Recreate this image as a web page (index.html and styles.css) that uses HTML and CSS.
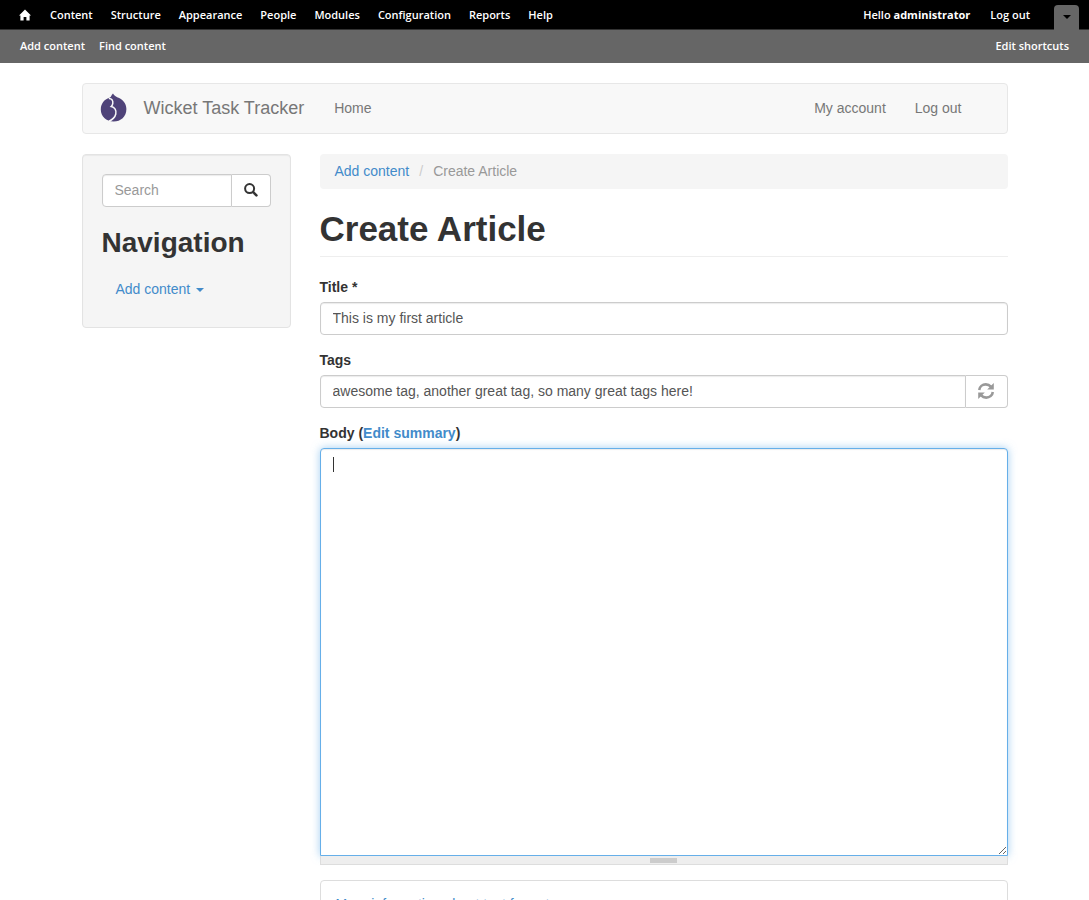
FILE: index.html
```html
<!DOCTYPE html>
<html lang="en">
<head>
    <meta charset="UTF-8">
    <meta name="viewport" content="width=device-width, initial-scale=1.0">
    <title>Create Article | Wicket Task Tracker</title>
    <link rel="stylesheet" href="styles.css">
</head>
<body>
    <div class="toolbar">
        <div class="toolbar-menu">
            <a href="#" class="toolbar-home" aria-label="Home">
                <svg width="12" height="12" viewBox="0 0 12 12" fill="#fff"><path d="M6 0.5 L12 6.5 H10.6 V11.5 H7.4 V8 H4.6 V11.5 H1.4 V6.5 H0 Z"/></svg>
            </a>
            <a href="#">Content</a>
            <a href="#">Structure</a>
            <a href="#">Appearance</a>
            <a href="#">People</a>
            <a href="#">Modules</a>
            <a href="#">Configuration</a>
            <a href="#">Reports</a>
            <a href="#">Help</a>
            <div class="toolbar-user">
                <a href="#">Hello <strong>administrator</strong></a>
                <a href="#">Log out</a>
                <button type="button" class="toolbar-toggle" aria-label="Toggle shortcuts"><span class="caret"></span></button>
            </div>
        </div>
        <div class="toolbar-shortcuts">
            <a href="#">Add content</a>
            <a href="#">Find content</a>
            <a href="#" class="edit-shortcuts">Edit shortcuts</a>
        </div>
    </div>

    <div class="container">
        <header class="navbar">
            <a href="#" class="logo" aria-label="Wicket Task Tracker">
                <svg width="28" height="30" viewBox="0 0 28 30">
                    <path fill="#4f4379" d="M13 0.4 C14 2 15.6 3.2 17.2 4.2 C22.6 5.8 26.4 10.4 26.4 16 C26.4 23.6 20.8 28.6 13.6 28.6 C6 28.6 0.8 23.4 0.8 16.6 C0.8 10.4 4.6 6.2 10 4.6 C11.6 3.6 11 2 13 0.4 Z"/>
                    <path fill="none" stroke="#f8f8f8" stroke-width="1.5" d="M8.8 5.4 C11.6 5.2 13.2 7.4 12.8 10.4 C12.6 11.8 12 12.8 11.2 13.6 C14.8 14.2 16.6 17.4 15.8 21 C15 24.4 12.6 26.6 9 28.2"/>
                </svg>
            </a>
            <a href="#" class="brand">Wicket Task Tracker</a>
            <a href="#">Home</a>
            <nav class="navbar-right">
                <a href="#">My account</a>
                <a href="#">Log out</a>
            </nav>
        </header>

        <div class="row">
            <aside class="sidebar">
                <form class="input-group">
                    <input type="text" class="form-control" placeholder="Search" aria-label="Search">
                    <button type="button" class="addon" aria-label="Search">
                        <svg width="14" height="16" viewBox="0 0 14 16" fill="none" stroke="#333"><circle cx="5.6" cy="5.6" r="4.5" stroke-width="2"/><path stroke-width="2.6" stroke-linecap="round" d="M9.4 9.4 L12.4 12.4"/></svg>
                    </button>
                </form>
                <h2>Navigation</h2>
                <a href="#" class="side-link">Add content <span class="caret"></span></a>
            </aside>

            <main class="content">
                <div class="breadcrumb">
                    <a href="#">Add content</a>
                    <span class="divider">/</span>
                    <span>Create Article</span>
                </div>
                <h1>Create Article</h1>

                <form>
                    <div class="form-item">
                        <label for="title">Title *</label>
                        <input type="text" id="title" class="form-control" value="This is my first article">
                    </div>
                    <div class="form-item">
                        <label for="tags">Tags</label>
                        <div class="input-group">
                            <input type="text" id="tags" class="form-control" value="awesome tag, another great tag, so many great tags here!">
                            <span class="addon tags-addon">
                                <svg width="18" height="20" viewBox="0 0 18 20" fill="none" stroke="#999" stroke-width="2.6"><path d="M2.2 8 C2.6 4.6 5.4 2.4 8.8 2.4 C10.8 2.4 12.6 3.2 13.9 4.6"/><path d="M15.8 10 C15.4 13.4 12.6 15.6 9.2 15.6 C7.2 15.6 5.4 14.8 4.1 13.4"/><path fill="#999" stroke="none" d="M16.8 1 V7.6 H10.2 Z M1.2 17 V10.4 H7.8 Z"/></svg>
                            </span>
                        </div>
                    </div>
                    <div class="form-item">
                        <label for="body">Body (<a href="#">Edit summary</a>)</label>
                        <div class="editor">
                            <textarea id="body" class="form-control"></textarea>
                            <span class="text-cursor"></span>
                        </div>
                        <div class="grippie"><span></span></div>
                    </div>
                    <div class="panel">
                        <a href="#">More information about text formats</a>
                    </div>
                </form>
            </main>
        </div>
    </div>
</body>
</html>
```
FILE: styles.css
```css
* {
    box-sizing: border-box;
}
html {
    overflow: hidden;
}
body {
    margin: 0;
    font-family: "Liberation Sans", Arial, sans-serif;
    font-size: 14px;
    line-height: 20px;
    color: #333;
    background-color: #fff;
}
a {
    color: #428bca;
    text-decoration: none;
}
svg {
    display: block;
}
.caret {
    display: inline-block;
    border-top: 4px solid;
    border-left: 4px solid transparent;
    border-right: 4px solid transparent;
    vertical-align: middle;
}

/* Admin toolbar */
.toolbar {
    font-family: "Open Sans", sans-serif;
    font-size: 11px;
    font-weight: 600;
}
.toolbar a {
    color: #fff;
}
.toolbar-menu {
    display: flex;
    align-items: center;
    gap: 18px;
    height: 30px;
    padding: 0 10px 0 19px;
    background-color: #000;
    border-bottom: 1px solid #333;
}
.toolbar-home {
    margin-right: 1px;
}
.toolbar-user {
    display: flex;
    align-items: center;
    gap: 20px;
    margin-left: auto;
}
.toolbar-user strong {
    font-weight: 700;
}
.toolbar-toggle {
    width: 25px;
    height: 25px;
    margin: 5px 0 0 4px;
    padding: 0;
    color: #000;
    background-color: #666;
    border: none;
    border-radius: 4px 4px 0 0;
}
.toolbar-toggle .caret {
    display: block;
    width: 0;
    margin: 0 auto;
}
.toolbar-shortcuts {
    display: flex;
    align-items: center;
    gap: 14px;
    height: 33px;
    padding: 0 20px 2px;
    background-color: #666;
}
.edit-shortcuts {
    margin-left: auto;
}

/* Site header */
.container {
    max-width: 926px;
    margin: 20px auto 0;
}
.navbar {
    display: flex;
    align-items: center;
    height: 51px;
    padding: 0 45px 1px 17px;
    background-color: #f8f8f8;
    border: 1px solid #e7e7e7;
    border-radius: 4px;
}
.navbar a {
    color: #777;
}
.navbar .brand {
    margin: 0 30px 0 16px;
    font-size: 18px;
}
.navbar-right {
    display: flex;
    gap: 29px;
    margin-left: auto;
}
.row {
    display: flex;
    align-items: flex-start;
    gap: 29px;
    margin-top: 20px;
}

/* Sidebar */
.sidebar {
    flex: 0 0 209px;
    padding: 19px 19px 28px;
    background-color: #f5f5f5;
    border: 1px solid #e3e3e3;
    border-radius: 4px;
    box-shadow: inset 0 1px 1px rgba(0, 0, 0, 0.05);
}
h2 {
    margin: 20px 0;
    font-size: 28px;
    line-height: 32px;
}
.side-link {
    display: block;
    padding: 0 14px;
}
.side-link .caret {
    margin-left: 2px;
}

/* Content */
.content {
    flex: 1;
    min-width: 0;
}
.breadcrumb {
    display: flex;
    gap: 10px;
    height: 35px;
    padding: 7px 15px;
    color: #999;
    background-color: #f5f5f5;
    border-radius: 4px;
}
.breadcrumb .divider {
    color: #ccc;
}
h1 {
    margin: 20px 0;
    padding-bottom: 8px;
    font-size: 35px;
    line-height: 39px;
    border-bottom: 1px solid #eee;
}
.form-item {
    margin-bottom: 15px;
}
label {
    display: block;
    margin-bottom: 5px;
    font-weight: bold;
}
.form-control {
    display: block;
    width: 100%;
    height: 33px;
    padding: 5px 12px 7px;
    font-family: inherit;
    font-size: 14px;
    line-height: 20px;
    color: #555;
    background-color: #fff;
    border: 1px solid #ccc;
    border-radius: 4px;
    box-shadow: inset 0 1px 1px rgba(0, 0, 0, 0.08);
}
.form-control::placeholder {
    color: #999;
}
.input-group {
    display: flex;
}
.input-group .form-control {
    flex: 1;
    min-width: 0;
    border-radius: 4px 0 0 4px;
}
.addon {
    display: flex;
    align-items: center;
    justify-content: center;
    width: 39px;
    padding: 0;
    background-color: #fff;
    border: 1px solid #ccc;
    border-left: none;
    border-radius: 0 4px 4px 0;
}
.tags-addon {
    width: 42px;
}
.editor {
    position: relative;
}
textarea.form-control {
    height: 408px;
    resize: vertical;
    border-color: #66afe9;
    border-radius: 4px 4px 0 0;
    outline: none;
    box-shadow: inset 0 1px 1px rgba(0, 0, 0, 0.08), 0 0 8px rgba(102, 175, 233, 0.6);
}
.text-cursor {
    position: absolute;
    top: 9px;
    left: 13px;
    width: 1px;
    height: 15px;
    background-color: #333;
}
.grippie {
    display: flex;
    position: relative;
    justify-content: center;
    height: 9px;
    padding-top: 2px;
    background-color: #eee;
    border: 1px solid #ddd;
    border-top: none;
}
.grippie span {
    width: 27px;
    height: 5px;
    background-color: #ccc;
}
.panel {
    padding: 13px 15px;
    border: 1px solid #ddd;
    border-radius: 4px;
}
```
